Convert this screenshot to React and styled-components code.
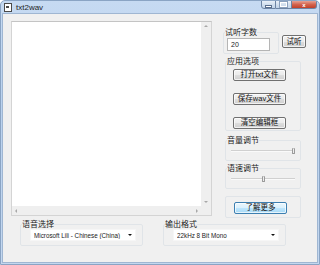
import React from 'react'
import styled, { createGlobalStyle } from 'styled-components'

const GlobalStyle = createGlobalStyle`
  html, body { margin: 0; padding: 0; background: #ffffff; }
  body { font-family: "Liberation Sans", "Noto Sans CJK SC", sans-serif; }
`

const Window = styled.div`
  width: 320px;
  height: 265px;
  box-sizing: border-box;
  display: flex;
  flex-direction: column;
  background: linear-gradient(180deg, #c6daf2 0%, #b9d1ee 40%, #c3d7ef 100%);
  border: 1px solid #8aa4c4;
  border-radius: 5px 5px 0 0;
  overflow: hidden;
`

const TitleBar = styled.div`
  height: 12px;
  display: flex;
  align-items: flex-start;
`

const TitleIcon = styled.div`
  width: 6px;
  height: 7px;
  margin: 2px 4px 0 3px;
  border: 1px solid #4a4a4a;
  background: #ffffff;
  position: relative;
  &::after {
    content: '';
    position: absolute;
    left: 1px;
    top: 2px;
    width: 3px;
    height: 2px;
    background: #4a4a4a;
  }
`

const Title = styled.span`
  font-size: 8px;
  line-height: 8px;
  margin-top: 3px;
  color: #1e1e1e;
`

const Controls = styled.div`
  margin-left: auto;
  margin-right: 2px;
  display: flex;
  margin-top: -1px;
`

const CtlButton = styled.div`
  width: ${p => p.$w}px;
  height: 9px;
  box-sizing: border-box;
  border: 1px solid #6d84a3;
  border-left-width: ${p => (p.$first ? 1 : 0)}px;
  border-radius: ${p => p.$r};
  background: ${p =>
    p.$close
      ? 'linear-gradient(180deg, #e6a294 0%, #d3634d 50%, #c1412a 100%)'
      : 'linear-gradient(180deg, #e9f0f8 0%, #d2dfee 50%, #c2d3e8 100%)'};
  display: flex;
  align-items: center;
  justify-content: center;
  color: #ffffff;
  font-size: 6px;
  font-weight: bold;
  line-height: 6px;
`

const MinGlyph = styled.div`
  width: 5px;
  height: 1px;
  margin-top: 3px;
  background: #ffffff;
  border: 1px solid #5a6e8c;
`

const MaxGlyph = styled.div`
  width: 5px;
  height: 3px;
  border: 1px solid #ffffff;
  outline: 1px solid #8aa0bd;
`

const Client = styled.div`
  flex: 1;
  margin: 0 1px 1px 1px;
  background: #f0f0f0;
  border: 1px solid #9fb6d2;
  display: flex;
  flex-direction: column;
  padding: 7px 0 0 8px;
  font-size: 8px;
  color: #1a1a1a;
`

const TopRow = styled.div`
  display: flex;
  align-items: flex-start;
`

const Editor = styled.div`
  width: 201px;
  height: 195px;
  box-sizing: border-box;
  border: 1px solid #d4d4d4;
  border-top-color: #c4c4c4;
  background: #ffffff;
  display: grid;
  grid-template-columns: 1fr 10px;
  grid-template-rows: 1fr 9px;
`

const TextSpace = styled.div`
  background: #ffffff;
`

const ScrollV = styled.div`
  background: #efefef;
  display: flex;
  flex-direction: column;
  justify-content: space-between;
  align-items: center;
  padding: 3px 0;
`

const ScrollH = styled.div`
  background: #efefef;
  display: flex;
  justify-content: space-between;
  align-items: center;
  padding: 0 3px;
`

const Corner = styled.div`
  background: #efefef;
`

const Arrow = styled.div`
  width: 0;
  height: 0;
  border: 2px solid transparent;
  ${p => p.$dir === 'up' && 'border-bottom: 2px solid #a8a8a8; border-top-width: 0;'}
  ${p => p.$dir === 'down' && 'border-top: 2px solid #a8a8a8; border-bottom-width: 0;'}
  ${p => p.$dir === 'left' && 'border-right: 2px solid #a8a8a8; border-left-width: 0;'}
  ${p => p.$dir === 'right' && 'border-left: 2px solid #a8a8a8; border-right-width: 0;'}
`

const Side = styled.div`
  margin-left: 11px;
  margin-top: 7px;
  width: 83px;
  display: flex;
  flex-direction: column;
`

const Group = styled.fieldset`
  margin: 0;
  padding: 0 0 4px 3px;
  border: 1px solid #e0e4e8;
  border-radius: 2px;
  width: ${p => p.$w || 'auto'};
  box-sizing: border-box;
  min-width: 0;
  margin-left: ${p => p.$ml || 0}px;
  margin-top: ${p => p.$mt || 0}px;
  height: ${p => (p.$h ? p.$h + 'px' : 'auto')};
`

const Legend = styled.legend`
  padding: 0;
  margin-left: -2px;
  font-size: 8px;
  line-height: 8px;
  font-family: "Noto Sans CJK SC", sans-serif;
  color: #222222;
`

const CountRow = styled.div`
  display: flex;
  align-items: flex-start;
`

const CountInput = styled.div`
  width: 43px;
  height: 13px;
  box-sizing: border-box;
  border: 1px solid #b5b5b5;
  background: #ffffff;
  font-size: 7px;
  line-height: 11px;
  padding-left: 3px;
  margin-top: 2px;
`

const Button = styled.div`
  width: ${p => p.$w}px;
  height: ${p => p.$h || 12}px;
  box-sizing: border-box;
  border: 1px solid ${p => (p.$primary ? '#3c7fb1' : '#707070')};
  border-radius: 2px;
  background: ${p =>
    p.$primary
      ? 'linear-gradient(180deg, #eaf6fd 0%, #d9f0fc 50%, #bee6fd 51%, #a7d9f5 100%)'
      : 'linear-gradient(180deg, #f2f2f2 0%, #ebebeb 50%, #dddddd 51%, #cfcfcf 100%)'};
  box-shadow: inset 0 0 0 1px rgba(255, 255, 255, 0.7);
  display: flex;
  align-items: center;
  justify-content: center;
  font-size: 7.5px;
  line-height: 8px;
  font-family: "Liberation Sans", "Noto Sans CJK SC", sans-serif;
  color: #111111;
  margin: ${p => p.$m || '0'};
`

const ButtonStack = styled.div`
  display: flex;
  flex-direction: column;
  gap: 12px;
  padding: 4px 0 2px 4px;
`

const Slider = styled.div`
  position: relative;
  height: 10px;
  margin: 2px 0 0 2px;
  width: 64px;
`

const Track = styled.div`
  position: absolute;
  left: 0;
  right: 0;
  top: 4px;
  height: 1px;
  background: #d0d0d0;
  border-bottom: 1px solid #fafafa;
`

const Thumb = styled.div`
  position: absolute;
  top: 2px;
  width: 1px;
  height: 4px;
  border: 1px solid #9a9a9a;
  border-top-color: #c8c8c8;
  background: #eeeeee;
  border-radius: 0 0 1px 1px;
`

const BottomRow = styled.div`
  display: flex;
  margin-top: 2px;
  margin-left: 9px;
`

const Select = styled.div`
  width: 106px;
  height: 12px;
  box-sizing: border-box;
  background: #ffffff;
  border: 1px solid #f6f6f6;
  display: flex;
  align-items: center;
  padding: 0 3px;
  margin: 1px 0 0 6px;
  font-size: 6.3px;
  white-space: nowrap;
`

const SelectText = styled.span`
  flex: 1;
  overflow: hidden;
`

const Caret = styled.div`
  width: 0;
  height: 0;
  margin-left: 2px;
  border-left: 2px solid transparent;
  border-right: 2px solid transparent;
  border-top: 2px solid #111111;
`

const Hz = (p) => <Slider><Track /><Thumb style={{ left: p.at + 'px' }} /></Slider>

export default function App() {
  return (
    <>
      <GlobalStyle />
      <Window>
        <TitleBar>
          <TitleIcon />
          <Title>txt2wav</Title>
          <Controls>
            <CtlButton $w={15} $first $r="0 0 0 3px"><MinGlyph /></CtlButton>
            <CtlButton $w={16} $r="0"><MaxGlyph /></CtlButton>
            <CtlButton $w={25} $close $r="0 0 3px 0">x</CtlButton>
          </Controls>
        </TitleBar>
        <Client>
          <TopRow>
            <Editor>
              <TextSpace />
              <ScrollV><Arrow $dir="up" /><Arrow $dir="down" /></ScrollV>
              <ScrollH><Arrow $dir="left" /><Arrow $dir="right" /></ScrollH>
              <Corner />
            </Editor>
            <Side>
              <CountRow>
                <Group $w="56px" $h={26}>
                  <Legend>试听字数</Legend>
                  <CountInput>20</CountInput>
                </Group>
                <Button $w={24} $h={13} $m="7px 0 0 3px">试听</Button>
              </CountRow>
              <Group $ml={2} $w="76px" $mt={3} $h={74}>
                <Legend>应用选项</Legend>
                <ButtonStack>
                  <Button $w={53}>打开txt文件</Button>
                  <Button $w={53}>保存wav文件</Button>
                  <Button $w={53}>清空编辑框</Button>
                </ButtonStack>
              </Group>
              <Group $ml={2} $w="76px" $mt={5} $h={25}>
                <Legend>音量调节</Legend>
                <Hz at={61} />
              </Group>
              <Group $ml={2} $w="76px" $mt={3} $h={25}>
                <Legend>语速调节</Legend>
                <Hz at={31} />
              </Group>
              <Group $ml={2} $w="76px" $mt={7} $h={22}>
                <Button $primary $w={53} $m="5px 0 0 5px">了解更多</Button>
              </Group>
            </Side>
          </TopRow>
          <BottomRow>
            <Group $w="123px" $h={26}>
              <Legend>语音选择</Legend>
              <Select><SelectText>Microsoft Lili - Chinese (China)</SelectText><Caret /></Select>
            </Group>
            <Group $w="123px" $ml={20} $h={26}>
              <Legend>输出格式</Legend>
              <Select><SelectText>22kHz 8 Bit Mono</SelectText><Caret /></Select>
            </Group>
          </BottomRow>
        </Client>
      </Window>
    </>
  )
}
